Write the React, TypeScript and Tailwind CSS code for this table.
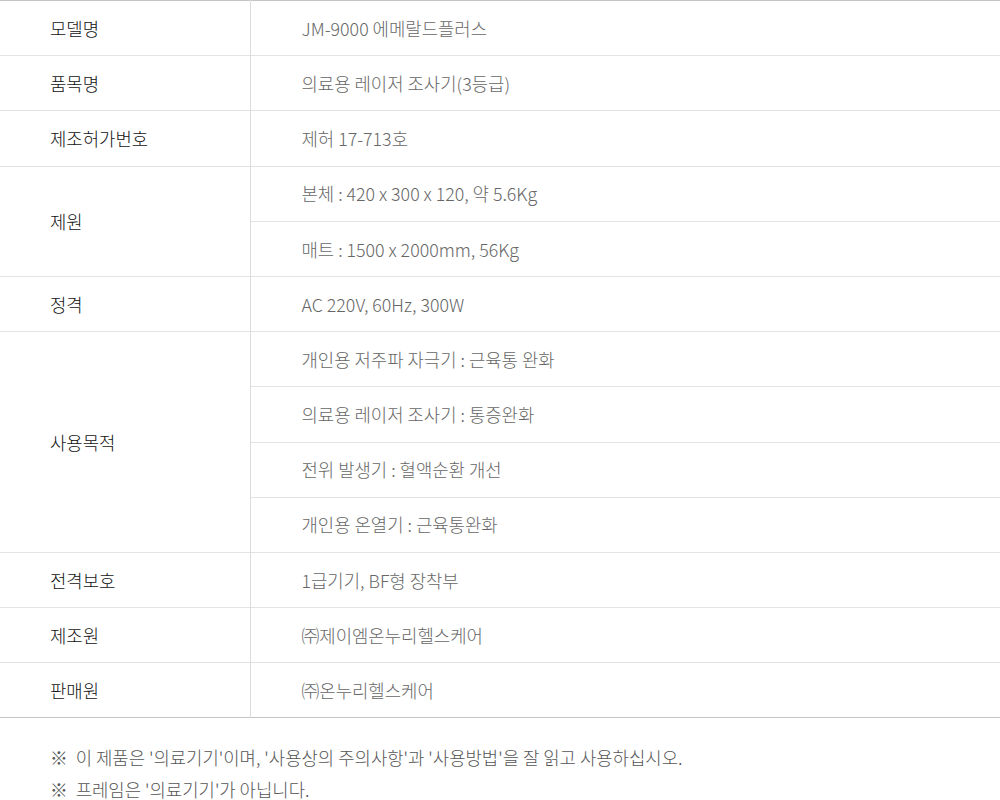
const rows: { label: string; values: string[] }[] = [
  { label: "모델명", values: ["JM-9000 에메랄드플러스"] },
  { label: "품목명", values: ["의료용 레이저 조사기(3등급)"] },
  { label: "제조허가번호", values: ["제허 17-713호"] },
  {
    label: "제원",
    values: ["본체 : 420 x 300 x 120, 약 5.6Kg", "매트 : 1500 x 2000mm, 56Kg"],
  },
  { label: "정격", values: ["AC 220V, 60Hz, 300W"] },
  {
    label: "사용목적",
    values: [
      "개인용 저주파 자극기 : 근육통 완화",
      "의료용 레이저 조사기 : 통증완화",
      "전위 발생기 : 혈액순환 개선",
      "개인용 온열기 : 근육통완화",
    ],
  },
  { label: "전격보호", values: ["1급기기, BF형 장착부"] },
  { label: "제조원", values: ["㈜제이엠온누리헬스케어"] },
  { label: "판매원", values: ["㈜온누리헬스케어"] },
];

export default function App() {
  return (
    <div
      className="w-[1000px] min-h-[800px] bg-white"
      style={{ fontFamily: '"Noto Sans CJK KR", "Noto Sans", sans-serif' }}
    >
      <table className="w-full border-collapse border-t border-b border-[#c4c4c4] text-[17.8px] font-light">
        <tbody>
          {rows.map((row) =>
            row.values.map((v, i) => (
              <tr key={row.label + i} className="border-t border-[#e3e3e3] first:border-t-0">
                {i === 0 && (
                  <td
                    rowSpan={row.values.length}
                    className="w-[250px] pl-[50px] text-[#111] border-r border-[#dcdcdc] align-middle"
                  >
                    {row.label}
                  </td>
                )}
                <td className="h-[55.2px] pl-[51px] text-[#666] align-middle">{v}</td>
              </tr>
            ))
          )}
        </tbody>
      </table>
      <div className="pt-[23px] pl-[50px] text-[17.8px] font-light text-[#555] leading-[32px]">
        <p>※&nbsp; 이 제품은 '의료기기'이며, '사용상의 주의사항'과 '사용방법'을 잘 읽고 사용하십시오.</p>
        <p>※&nbsp; 프레임은 '의료기기'가 아닙니다.</p>
      </div>
    </div>
  );
}
